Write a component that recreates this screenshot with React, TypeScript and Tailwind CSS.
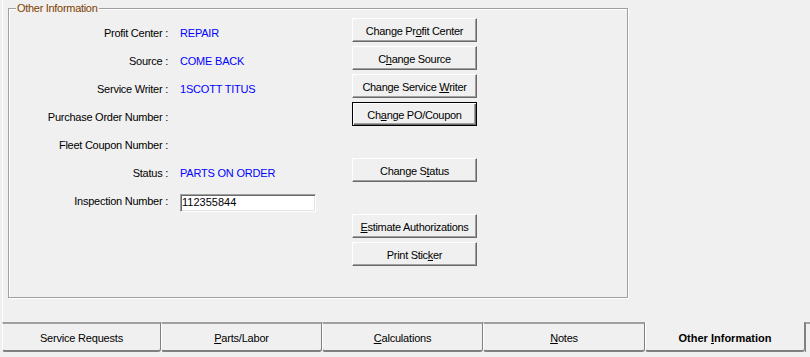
import React from "react";

const FONT = "font-['Liberation_Sans',Arial,sans-serif]";

function Btn({ children, def }: { children: React.ReactNode; def?: boolean }) {
  return (
    <div
      className={
        def
          ? "w-[125px] h-[24px] bg-[#f0f0f0] border border-black shadow-[inset_1px_1px_0_#fff,inset_-1px_-1px_0_#696969,inset_-2px_-2px_0_#a0a0a0] flex items-center justify-center text-[11px] tracking-[-0.3px] text-black pt-[2px]"
          : "w-[125px] h-[24px] bg-[#f0f0f0] border border-t-white border-l-white border-r-[#696969] border-b-[#696969] shadow-[inset_-1px_-1px_0_#a0a0a0] flex items-center justify-center text-[11px] tracking-[-0.3px] text-black pt-[2px]"
      }
    >
      <span>{children}</span>
    </div>
  );
}

type Row = {
  label?: string;
  value?: React.ReactNode;
  btn?: React.ReactNode;
  def?: boolean;
  input?: string;
};

const rows: Row[] = [
  { label: "Profit Center :", value: "REPAIR", btn: <>Change Pr<u>o</u>fit Center</> },
  { label: "Source :", value: "COME BACK", btn: <>C<u>h</u>ange Source</> },
  { label: "Service Writer :", value: "1SCOTT TITUS", btn: <>Change Service <u>W</u>riter</> },
  { label: "Purchase Order Number :", btn: <>Ch<u>a</u>nge PO/Coupon</>, def: true },
  { label: "Fleet Coupon Number :" },
  { label: "Status :", value: "PARTS ON ORDER", btn: <>Change S<u>t</u>atus</> },
  { label: "Inspection Number :", input: "112355844" },
  { btn: <><u>E</u>stimate Authorizations</> },
  { btn: <>Print Stic<u>k</u>er</> },
];

function Tab({
  children,
  w,
  selected,
}: {
  children?: React.ReactNode;
  w: string;
  selected?: boolean;
}) {
  if (selected) {
    return (
      <div
        className={`${w} shrink-0 h-[30px] border-b-2 border-b-[#808080] border-r border-r-[#808080] border-l border-l-white rounded-b-[3px] flex items-center justify-center text-[11px] font-bold text-black pt-[5px]`}
      >
        <span>{children}</span>
      </div>
    );
  }
  return (
    <div
      className={`${w} shrink-0 h-[30px] border-t-2 border-t-[#a0a0a0] border-b-2 border-b-[#808080] border-r border-r-[#808080] border-l border-l-white rounded-b-[3px] flex items-center justify-center text-[11px] tracking-[-0.2px] text-black pt-[3px]`}
    >
      <span>{children}</span>
    </div>
  );
}

export default function App() {
  return (
    <div className={`w-[810px] h-[357px] bg-[#f0f0f0] overflow-hidden ${FONT}`}>
      <div className="h-[322px] ml-[2px] border-l border-l-white pl-[5px] pt-[8px]">
        <div className="relative w-[620px] h-[290px] border border-[#a0a0a0] shadow-[inset_1px_1px_0_#fff,1px_1px_0_#fff]">
          <div className="absolute left-[7px] top-[-7px] px-[1px] bg-[#f0f0f0] text-[11px] leading-[13px] tracking-[-0.3px] text-[#804000]">
            Other Information
          </div>
          <div className="pt-[9px] flex flex-col">
            {rows.map((r, i) => (
              <div key={i} className="flex h-[28px]">
                <div className="w-[159px] h-[28px] flex items-center justify-end pt-[2px] text-[11px] tracking-[-0.25px] text-black whitespace-nowrap">
                  {r.label ?? ""}
                </div>
                <div className="w-[12px]" />
                <div className="w-[172px] h-[28px] flex items-center pt-[2px] text-[11px] tracking-[-0.2px] text-[#0000ff] whitespace-nowrap">
                  {r.input ? (
                    <div className="w-[136px] h-[18px] mt-[3px] bg-white border border-t-[#a0a0a0] border-l-[#a0a0a0] border-r-white border-b-white shadow-[inset_1px_1px_0_#696969,inset_-1px_-1px_0_#e3e3e3] pl-[1px] flex items-center text-black text-[11px] tracking-normal">
                      {r.input}
                    </div>
                  ) : (
                    r.value ?? ""
                  )}
                </div>
                <div className="w-[125px]">
                  {r.btn ? <Btn def={r.def}>{r.btn}</Btn> : null}
                </div>
              </div>
            ))}
          </div>
        </div>
      </div>
      <div className="flex pl-[2px]">
        <Tab w="w-[159px]">Service Requests</Tab>
        <Tab w="w-[161px]">
          <u>P</u>arts/Labor
        </Tab>
        <Tab w="w-[161px]">
          <u>C</u>alculations
        </Tab>
        <Tab w="w-[162px]">
          <u>N</u>otes
        </Tab>
        <Tab w="w-[160px]" selected>
          Other <u>I</u>nformation
        </Tab>
        <div className="w-[5px] shrink-0 h-[30px] border-t-2 border-t-[#a0a0a0] border-l border-l-[#808080]" />
      </div>
    </div>
  );
}
